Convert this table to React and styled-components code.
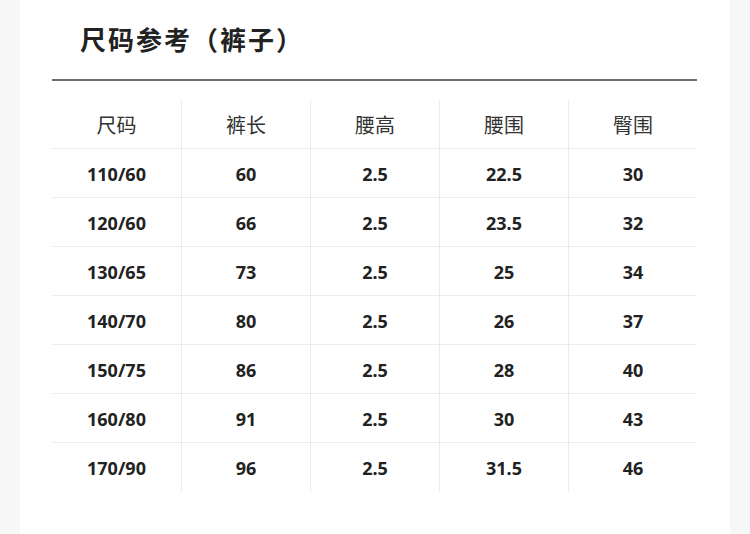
import React from 'react';
import styled, { createGlobalStyle } from 'styled-components';

const GlobalStyle = createGlobalStyle`
    html, body {
        margin: 0;
        padding: 0;
        background: #f7f7f7;
    }
    body {
        font-family: "Noto Sans", "Noto Sans CJK SC", sans-serif;
    }
`;

const Page = styled.div`
    width: 750px;
    height: 534px;
    padding: 0 20px;
    box-sizing: border-box;
    overflow: hidden;
`;

const Card = styled.div`
    background: #fff;
    height: 100%;
    padding: 0 33px 0 32px;
    box-sizing: border-box;
`;

const Title = styled.h2`
    margin: 0;
    padding: 21px 0 0 28px;
    height: 58px;
    box-sizing: border-box;
    font-family: "Noto Sans CJK SC", sans-serif;
    font-size: 26px;
    font-weight: 700;
    line-height: 36px;
    color: #222;
    letter-spacing: 2px;
`;

const Divider = styled.div`
    height: 2px;
    margin-top: 21px;
    background: #6e6e6e;
`;

const Table = styled.div`
    margin-top: 19px;
    display: grid;
    grid-template-columns: repeat(5, 1fr);
`;

const Cell = styled.div`
    height: 49px;
    display: flex;
    align-items: center;
    justify-content: center;
    box-sizing: border-box;
    border-bottom: ${p => (p.$last ? 'none' : '1px solid #ececec')};
    border-left: ${p => (p.$first ? 'none' : '1px solid #ececec')};
    font-family: ${p => (p.$head ? '"Noto Sans CJK SC", sans-serif' : '"Noto Sans", "Noto Sans CJK SC", sans-serif')};
    font-size: ${p => (p.$head ? '20px' : '18px')};
    font-weight: ${p => (p.$head ? 400 : 700)};
    color: ${p => (p.$head ? '#333' : '#222')};
    padding-top: 1px;
`;

const head = ['尺码', '裤长', '腰高', '腰围', '臀围'];
const rows = [
    ['110/60', '60', '2.5', '22.5', '30'],
    ['120/60', '66', '2.5', '23.5', '32'],
    ['130/65', '73', '2.5', '25', '34'],
    ['140/70', '80', '2.5', '26', '37'],
    ['150/75', '86', '2.5', '28', '40'],
    ['160/80', '91', '2.5', '30', '43'],
    ['170/90', '96', '2.5', '31.5', '46'],
];

export default function App() {
    return (
        <Page>
            <GlobalStyle />
            <Card>
                <Title>尺码参考（裤子）</Title>
                <Divider />
                <Table>
                    {head.map((h, i) => (
                        <Cell key={h} $head $first={i === 0}>{h}</Cell>
                    ))}
                    {rows.map((r, ri) =>
                        r.map((v, ci) => (
                            <Cell key={ri + '-' + ci} $first={ci === 0} $last={ri === rows.length - 1}>
                                {v}
                            </Cell>
                        ))
                    )}
                </Table>
            </Card>
        </Page>
    );
}
